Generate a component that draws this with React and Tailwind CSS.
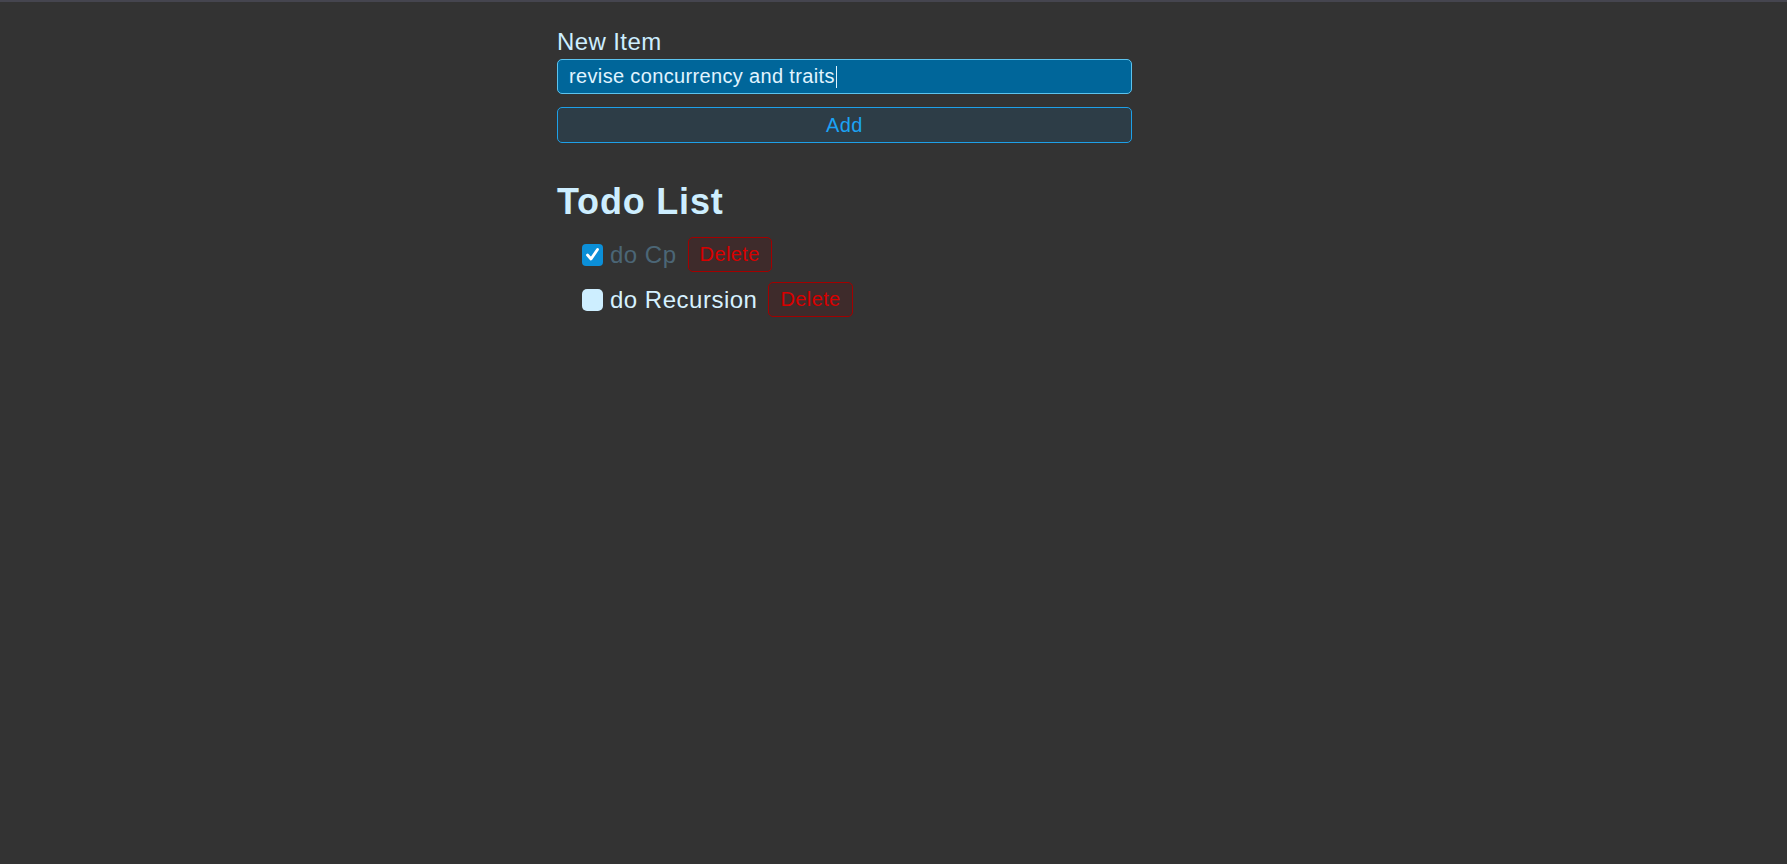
import React from "react";

function Check({ checked }) {
  if (checked) {
    return (
      <div className="w-[21px] h-[22px] rounded-[4px] bg-[#0b8fd8] flex items-center justify-center shrink-0">
        <svg width="15" height="15" viewBox="0 0 15 15">
          <path d="M2.5 8 L6 12 L12.5 2.5" fill="none" stroke="#ffffff" strokeWidth="2.8" strokeLinecap="round" strokeLinejoin="round" />
        </svg>
      </div>
    );
  }
  return <div className="w-[21px] h-[22px] rounded-[5px] bg-[#cdeeff] shrink-0" />;
}

function Item({ text, done }) {
  return (
    <li className="flex items-center h-[35px]">
      <Check checked={done} />
      <span className={"ml-[7px] text-[24px] leading-[28px] tracking-[0.5px] " + (done ? "text-[#4b6676]" : "text-[#d6f1ff]")}>{text}</span>
      <button className="ml-[11px] h-[35px] px-[11px] rounded-[5px] border border-[#a30000] bg-[#3e2b2b] text-[20px] leading-[23px] tracking-[0.4px] text-[#d80000]">
        Delete
      </button>
    </li>
  );
}

export default function App() {
  return (
    <div className="min-h-screen bg-[#333333] font-['Liberation_Sans',Arial,sans-serif]">
      <div className="h-[2px] bg-[#45454f]" />
      <div className="ml-[557px] w-[575px] pt-[26px]">
        <label className="block text-[24px] leading-[28px] tracking-[0.4px] text-[#cdeeff]">New Item</label>
        <div className="mt-[3px] h-[35px] rounded-[5px] border border-[#5cc3ee] bg-[#00669a] pl-[11px] flex items-center text-[20px] leading-[23px] tracking-[0.35px] text-[#e0f4ff]">
          <span>revise concurrency and traits</span>
          <span className="ml-px w-px h-[22px] bg-[#e0f4ff]" />
        </div>
        <button className="mt-[13px] w-full h-[36px] rounded-[5px] border border-[#1ea0e8] bg-[#2d3d47] text-[20px] leading-[23px] tracking-[0.4px] text-[#1ba3f5]">
          Add
        </button>
        <h2 className="mt-[38px] text-[36px] leading-[42px] font-bold tracking-[0.8px] text-[#cdeeff]">Todo List</h2>
        <ul className="mt-[14px] pl-[25px] flex flex-col gap-[10px]">
          <Item text="do Cp" done />
          <Item text="do Recursion" />
        </ul>
      </div>
    </div>
  );
}
